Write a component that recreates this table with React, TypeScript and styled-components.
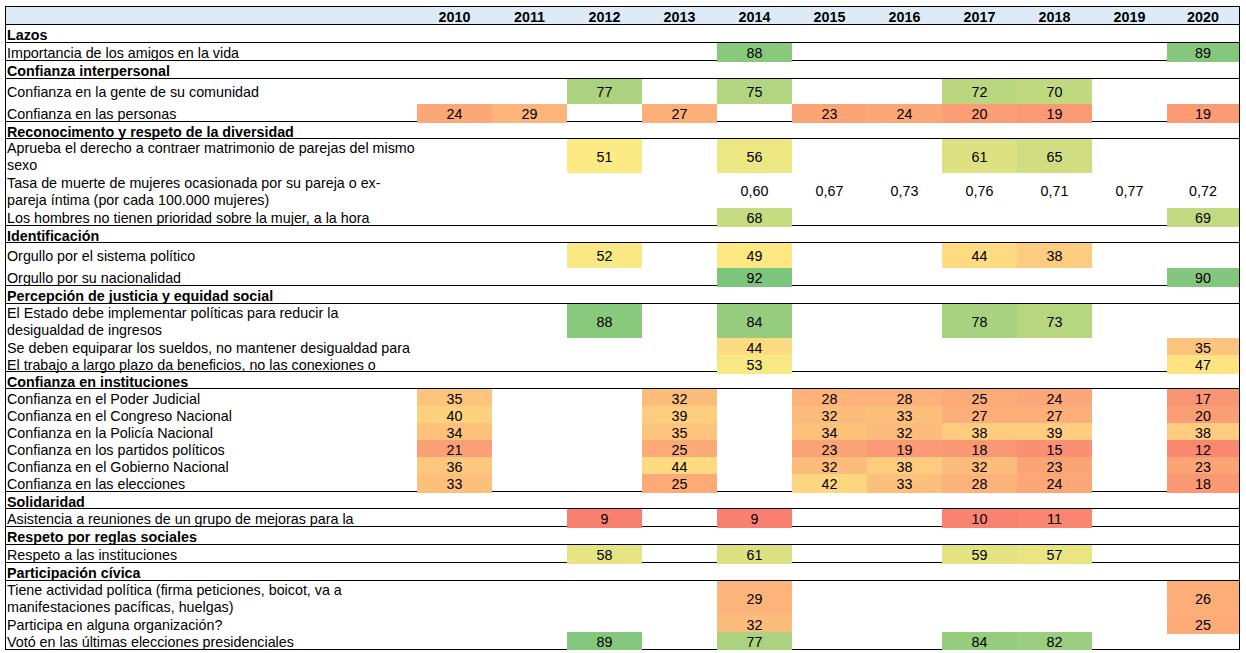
import React from 'react';
import styled, { createGlobalStyle, css } from 'styled-components';

const YEARS = [2010, 2011, 2012, 2013, 2014, 2015, 2016, 2017, 2018, 2019, 2020];

type Value = number | string | null;

interface Section {
  kind: 'section';
  label: string;
  h: number;
}

interface Item {
  kind: 'item';
  lines: string[];
  h: number;
  rule?: boolean;
  values: Value[];
}

type Entry = Section | Item;

const _ = null;

const ROWS: Entry[] = [
  { kind: 'section', label: 'Lazos', h: 17 },
  { kind: 'item', lines: ['Importancia de los amigos en la vida'], h: 17, rule: true, values: [_, _, _, _, 88, _, _, _, _, _, 89] },
  { kind: 'section', label: 'Confianza interpersonal', h: 17 },
  { kind: 'item', lines: ['Confianza en la gente de su comunidad'], h: 25, values: [_, _, 77, _, 75, _, _, 72, 70, _, _] },
  { kind: 'item', lines: ['Confianza en las personas'], h: 17, rule: true, values: [24, 29, _, 27, _, 23, 24, 20, 19, _, 19] },
  { kind: 'section', label: 'Reconocimento y respeto de la diversidad', h: 16 },
  { kind: 'item', lines: ['Aprueba el derecho a contraer matrimonio de parejas del mismo', 'sexo'], h: 34, values: [_, _, 51, _, 56, _, _, 61, 65, _, _] },
  { kind: 'item', lines: ['Tasa de muerte de mujeres ocasionada por su pareja o ex-', 'pareja íntima (por cada 100.000 mujeres)'], h: 35, values: [_, _, _, _, '0,60', '0,67', '0,73', '0,76', '0,71', '0,77', '0,72'] },
  { kind: 'item', lines: ['Los hombres no tienen prioridad sobre la mujer, a la hora'], h: 17, rule: true, values: [_, _, _, _, 68, _, _, _, _, _, 69] },
  { kind: 'section', label: 'Identificación', h: 16 },
  { kind: 'item', lines: ['Orgullo por el sistema político'], h: 25, values: [_, _, 52, _, 49, _, _, 44, 38, _, _] },
  { kind: 'item', lines: ['Orgullo por su nacionalidad'], h: 17, rule: true, values: [_, _, _, _, 92, _, _, _, _, _, 90] },
  { kind: 'section', label: 'Percepción de justicia y equidad social', h: 17 },
  { kind: 'item', lines: ['El Estado debe implementar políticas para reducir la', 'desigualdad de ingresos'], h: 34, values: [_, _, 88, _, 84, _, _, 78, 73, _, _] },
  { kind: 'item', lines: ['Se deben equiparar los sueldos, no mantener desigualdad para'], h: 17, values: [_, _, _, _, 44, _, _, _, _, _, 35] },
  { kind: 'item', lines: ['El trabajo a largo plazo da beneficios, no las conexiones o'], h: 16, rule: true, values: [_, _, _, _, 53, _, _, _, _, _, 47] },
  { kind: 'section', label: 'Confianza en instituciones', h: 16 },
  { kind: 'item', lines: ['Confianza en el Poder Judicial'], h: 17, values: [35, _, _, 32, _, 28, 28, 25, 24, _, 17] },
  { kind: 'item', lines: ['Confianza en el Congreso Nacional'], h: 17, values: [40, _, _, 39, _, 32, 33, 27, 27, _, 20] },
  { kind: 'item', lines: ['Confianza en la Policía Nacional'], h: 17, values: [34, _, _, 35, _, 34, 32, 38, 39, _, 38] },
  { kind: 'item', lines: ['Confianza en los partidos políticos'], h: 17, values: [21, _, _, 25, _, 23, 19, 18, 15, _, 12] },
  { kind: 'item', lines: ['Confianza en el Gobierno Nacional'], h: 17, values: [36, _, _, 44, _, 32, 38, 32, 23, _, 23] },
  { kind: 'item', lines: ['Confianza en las elecciones'], h: 17, rule: true, values: [33, _, _, 25, _, 42, 33, 28, 24, _, 18] },
  { kind: 'section', label: 'Solidaridad', h: 16 },
  { kind: 'item', lines: ['Asistencia a reuniones de un grupo de mejoras para la'], h: 17, rule: true, values: [_, _, 9, _, 9, _, _, 10, 11, _, _] },
  { kind: 'section', label: 'Respeto por reglas sociales', h: 17 },
  { kind: 'item', lines: ['Respeto a las instituciones'], h: 17, rule: true, values: [_, _, 58, _, 61, _, _, 59, 57, _, _] },
  { kind: 'section', label: 'Participación cívica', h: 17 },
  { kind: 'item', lines: ['Tiene actividad política (firma peticiones, boicot, va a', 'manifestaciones pacíficas, huelgas)'], h: 34, values: [_, _, _, _, 29, _, _, _, _, _, 26] },
  { kind: 'item', lines: ['Participa en alguna organización?'], h: 17, values: [_, _, _, _, 32, _, _, _, _, _, 25] },
  { kind: 'item', lines: ['Votó en las últimas elecciones presidenciales'], h: 17, values: [_, _, 89, _, 77, _, _, 84, 82, _, _] },
];

// three colour scale: red (0) -> yellow (50) -> green (100)
const RED = [248, 105, 107];
const YELLOW = [255, 235, 132];
const GREEN = [99, 190, 123];

const scaleColor = (v: number) => {
  const [from, to, t] = v <= 50 ? [RED, YELLOW, v / 50] : [YELLOW, GREEN, (v - 50) / 50];
  const mix = from.map((c, i) => Math.round(c + (to[i] - c) * Math.min(1, Math.max(0, t))));
  return `rgb(${mix.join(',')})`;
};

const GlobalStyle = createGlobalStyle`
  html, body {
    margin: 0;
    padding: 0;
    background: #ffffff;
  }
  body {
    font-family: "Liberation Sans", Arial, sans-serif;
    color: #000;
  }
`;

// text sits a pixel low in the sheet cells
const cellText = css`
  display: flex;
  align-items: center;
  padding-top: 2px;
  white-space: nowrap;
`;

const Page = styled.div`
  padding: 6px 0 0 5px;
`;

const Table = styled.div`
  width: 1233px;
  border: 1px solid #000;
  font-size: 14.3px;
  line-height: 17px;
`;

const Row = styled.div<{ $h: number; $rule?: boolean; $head?: boolean }>`
  display: grid;
  grid-template-columns: 411px repeat(10, 75px) 72px;
  height: ${p => p.$h}px;
  border-bottom: ${p => (p.$rule ? '1px solid #000' : 'none')};
  background: ${p => (p.$head ? '#ddebf7' : 'transparent')};
`;

const Label = styled.div`
  ${cellText};
  flex-direction: column;
  align-items: flex-start;
  justify-content: center;
  padding-left: 1px;
  overflow: hidden;
`;

const SectionTitle = styled.div`
  ${cellText};
  grid-column: 1 / -1;
  padding-left: 1px;
  font-weight: 700;
`;

const YearCell = styled.div`
  ${cellText};
  justify-content: center;
  font-weight: 700;
`;

const ValueCell = styled.div<{ $bg: string }>`
  ${cellText};
  justify-content: center;
  background: ${p => p.$bg};
`;

const App: React.FC = () => {
  return (
    <Page>
      <GlobalStyle />
      <Table>
        <Row $h={17} $rule $head>
          <Label />
          {YEARS.map(y => (
            <YearCell key={y}>{y}</YearCell>
          ))}
        </Row>
        {ROWS.map((row, i) =>
          row.kind === 'section' ? (
            <Row key={i} $h={row.h} $rule>
              <SectionTitle>{row.label}</SectionTitle>
            </Row>
          ) : (
            <Row key={i} $h={row.h} $rule={row.rule}>
              <Label>
                {row.lines.map(line => (
                  <span key={line}>{line}</span>
                ))}
              </Label>
              {row.values.map((v, j) => (
                <ValueCell key={j} $bg={typeof v === 'number' ? scaleColor(v) : 'transparent'}>
                  {v}
                </ValueCell>
              ))}
            </Row>
          )
        )}
      </Table>
    </Page>
  );
};

export default App;
